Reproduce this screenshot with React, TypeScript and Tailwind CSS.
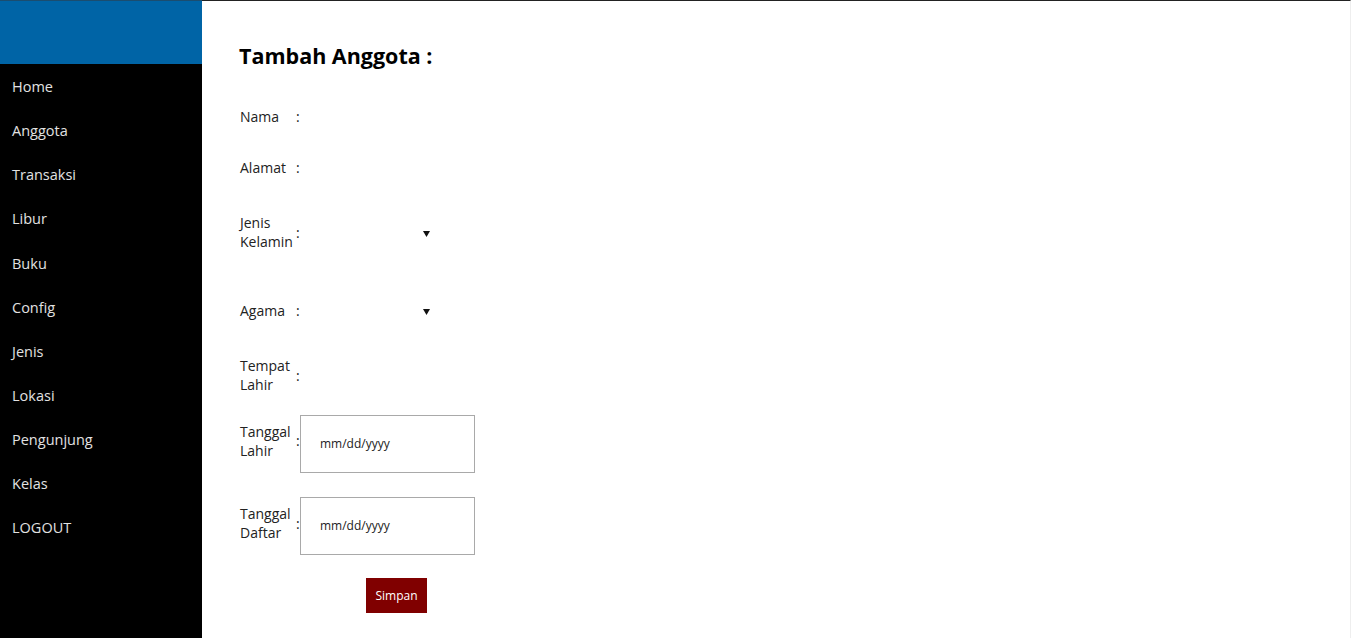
import React from "react";

const menu = ["Home", "Anggota", "Transaksi", "Libur", "Buku", "Config", "Jenis", "Lokasi", "Pengunjung", "Kelas", "LOGOUT"];

function Label({ lines, up }: { lines: string[]; up?: boolean }) {
  return (
    <div className={up ? "mb-[6px] flex items-center" : "flex items-center"}>
      <div className="w-[56px] leading-[19px]">
        {lines.map((l) => (
          <div key={l}>{l}</div>
        ))}
      </div>
      <div className="w-[4px]">:</div>
    </div>
  );
}

function Arrow() {
  return (
    <div className="mt-[3px] flex w-[135px] justify-end pr-[5px]">
      <svg width="7" height="6" viewBox="0 0 7 6">
        <path d="M0 0 L7 0 L3.5 6 Z" fill="#111" />
      </svg>
    </div>
  );
}

function DateBox() {
  return (
    <div className="flex h-[58px] w-[175px] items-center border border-[#a9a9a9] pl-[19px] text-[12px] text-[#222]">
      mm/dd/yyyy
    </div>
  );
}

export default function App() {
  return (
    <div className="flex h-[638px] w-[1351px] overflow-hidden bg-white" style={{ fontFamily: '"Open Sans", "Noto Sans", sans-serif' }}>
      <aside className="flex w-[202px] shrink-0 flex-col bg-black">
        <div className="h-[64px] border-t border-[#1b4d70] bg-[#0064a6]" />
        <nav className="flex flex-col pt-[1px]">
          {menu.map((m) => (
            <div key={m} className="flex h-[44.1px] items-center pl-[12px] text-[14.5px] text-[#e2e2e2]">
              {m}
            </div>
          ))}
        </nav>
      </aside>
      <main className="flex flex-1 flex-col border-t border-r border-t-[#222] border-r-[#eeeeee] pl-[37px] text-[14px] text-[#222]">
        <h1 className="mt-[41px] h-[28px] text-[21.5px] font-bold leading-[28px] text-black">Tambah Anggota :</h1>
        <div className="mt-[21px] flex flex-col pl-[1px]">
          <div className="flex h-[51px] items-center">
            <Label lines={["Nama"]} />
          </div>
          <div className="flex h-[51px] items-center">
            <Label lines={["Alamat"]} />
          </div>
          <div className="flex h-[78px] items-center">
            <Label lines={["Jenis", "Kelamin"]} />
            <Arrow />
          </div>
          <div className="flex h-[78px] items-center">
            <Label lines={["Agama"]} />
            <Arrow />
          </div>
          <div className="flex h-[52px] items-center">
            <Label lines={["Tempat", "Lahir"]} />
          </div>
          <div className="flex h-[85px] items-center">
            <Label lines={["Tanggal", "Lahir"]} up />
            <DateBox />
          </div>
          <div className="flex h-[80px] items-center">
            <Label lines={["Tanggal", "Daftar"]} up />
            <DateBox />
          </div>
          <div className="mt-[12px] pl-[126px]">
            <button className="flex h-[35px] w-[61px] items-center justify-center bg-[#800000] text-[12px] text-white">
              Simpan
            </button>
          </div>
        </div>
      </main>
    </div>
  );
}
